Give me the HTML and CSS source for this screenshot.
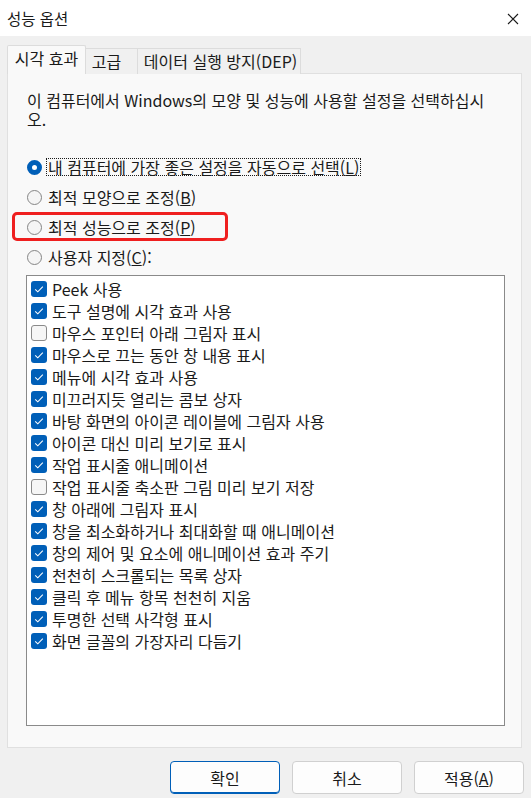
FILE: index.html
```html
<!DOCTYPE html>
<html lang="ko">
<head>
    <meta charset="UTF-8">
    <title>성능 옵션</title>
    <link rel="stylesheet" href="styles.css">
</head>
<body>
    <div class="titlebar">
        <span class="title">성능 옵션</span>
        <svg class="close" width="12" height="12" viewBox="0 0 12 12">
            <path d="M1 1 L11 11 M11 1 L1 11" stroke="#1a1a1a" stroke-width="1.1" fill="none"/>
        </svg>
    </div>

    <div class="tabs">
        <div class="tab tab-visual active">시각 효과</div>
        <div class="tab tab-advanced">고급</div>
        <div class="tab tab-dep">데이터 실행 방지(DEP)</div>
    </div>

    <div class="panel">
        <p class="intro">이 컴퓨터에서 Windows의 모양 및 성능에 사용할 설정을 선택하십시오.</p>

        <div class="radios">
            <div class="radio-row">
                <span class="radio checked"></span>
                <span class="radio-label focused">내 컴퓨터에 가장 좋은 설정을 자동으로 선택(<u>L</u>)</span>
            </div>
            <div class="radio-row">
                <span class="radio"></span>
                <span class="radio-label">최적 모양으로 조정(<u>B</u>)</span>
            </div>
            <div class="radio-row highlighted">
                <span class="radio"></span>
                <span class="radio-label">최적 성능으로 조정(<u>P</u>)</span>
                <span class="mark"></span>
            </div>
            <div class="radio-row">
                <span class="radio"></span>
                <span class="radio-label">사용자 지정(<u>C</u>):</span>
            </div>
        </div>

        <div class="listbox" id="listbox"></div>
    </div>

    <div class="buttons">
        <button class="btn default">확인</button>
        <button class="btn">취소</button>
        <button class="btn">적용(<u>A</u>)</button>
    </div>

    <script>
        const effects = [
            { label: "Peek 사용", on: true },
            { label: "도구 설명에 시각 효과 사용", on: true },
            { label: "마우스 포인터 아래 그림자 표시", on: false },
            { label: "마우스로 끄는 동안 창 내용 표시", on: true },
            { label: "메뉴에 시각 효과 사용", on: true },
            { label: "미끄러지듯 열리는 콤보 상자", on: true },
            { label: "바탕 화면의 아이콘 레이블에 그림자 사용", on: true },
            { label: "아이콘 대신 미리 보기로 표시", on: true },
            { label: "작업 표시줄 애니메이션", on: true },
            { label: "작업 표시줄 축소판 그림 미리 보기 저장", on: false },
            { label: "창 아래에 그림자 표시", on: true },
            { label: "창을 최소화하거나 최대화할 때 애니메이션", on: true },
            { label: "창의 제어 및 요소에 애니메이션 효과 주기", on: true },
            { label: "천천히 스크롤되는 목록 상자", on: true },
            { label: "클릭 후 메뉴 항목 천천히 지움", on: true },
            { label: "투명한 선택 사각형 표시", on: true },
            { label: "화면 글꼴의 가장자리 다듬기", on: true }
        ];

        const tick = '<svg width="16" height="16" viewBox="0 0 16 16"><path d="M4.2 8.3 L6.8 10.8 L11.8 5.6" stroke="#fff" stroke-width="1.1" fill="none"/></svg>';

        const listbox = document.getElementById("listbox");
        effects.forEach(function (item) {
            const row = document.createElement("div");
            row.className = "item";
            const box = document.createElement("span");
            box.className = item.on ? "check on" : "check";
            if (item.on) box.innerHTML = tick;
            const text = document.createElement("span");
            text.textContent = item.label;
            row.appendChild(box);
            row.appendChild(text);
            listbox.appendChild(row);
        });
    </script>
</body>
</html>
```

FILE: styles.css
```css
body {
    margin: 0;
    background: #f0f0f0;
    color: #1a1a1a;
    font-family: "Noto Sans CJK KR", "Noto Sans", sans-serif;
    font-size: 16px;
    width: 531px;
    height: 798px;
    overflow: hidden;
}
.titlebar {
    height: 36px;
    background: #ffffff;
    display: flex;
    align-items: center;
    justify-content: space-between;
    padding: 0 12px 0 7px;
}
.title {
    font-size: 15.5px;
    line-height: 20px;
}
.close {
    margin-top: 1px;
}
.tabs {
    display: flex;
    align-items: flex-end;
    margin: 10px 0 -1px 7px;
    height: 28px;
    position: relative;
    z-index: 1;
}
.tab {
    box-sizing: border-box;
    height: 26px;
    line-height: 24px;
    text-align: center;
    border: 1px solid #dcdcdc;
    border-bottom: none;
    background: #f0f0f0;
}
.tab.active {
    height: 29px;
    line-height: 24px;
    background: #f9f9f9;
    border-radius: 2px 2px 0 0;
}
.tab-visual { width: 79px; }
.tab-advanced { width: 52px; border-left: none; padding-right: 10px; }
.tab-dep { width: 163px; border-left: none; padding-left: 3px; }

.panel {
    box-sizing: border-box;
    margin-left: 7px;
    width: 515px;
    height: 675px;
    background: #f9f9f9;
    border: 1px solid #e0e0e0;
    padding: 17px 16px 0 18px;
}
.intro {
    margin: 0 0 0 1px;
    line-height: 19px;
    width: 470px;
}
.radios {
    margin-top: 23px;
}
.radio-row {
    display: flex;
    align-items: center;
    height: 30px;
    padding-left: 1px;
    position: relative;
}
.radio {
    box-sizing: border-box;
    width: 15px;
    height: 15px;
    border-radius: 50%;
    border: 1px solid #858585;
    background: #f5f5f5;
    margin-right: 5px;
    flex-shrink: 0;
}
.radio.checked {
    border: 5px solid #005fb8;
    background: #ffffff;
}
.radio-label {
    line-height: 16px;
    padding: 0 1px;
}
.radio-label.focused {
    outline: 1px dotted #1a1a1a;
    outline-offset: 0;
}
.mark {
    position: absolute;
    left: -14px;
    top: 0;
    width: 216px;
    height: 29px;
    box-sizing: border-box;
    border: 3px solid #ef1f1f;
    border-radius: 5px;
}
.listbox {
    box-sizing: border-box;
    margin-top: 3px;
    height: 451px;
    width: 479px;
    background: #ffffff;
    border: 1px solid #8a8a8a;
    padding: 2px 0 0 4px;
}
.item {
    display: flex;
    align-items: center;
    height: 22px;
}
.check {
    box-sizing: border-box;
    width: 16px;
    height: 16px;
    border-radius: 3px;
    border: 1px solid #8a8a8a;
    background: #f6f6f6;
    margin-right: 5px;
    flex-shrink: 0;
}
.check.on {
    border: none;
    background: #005fb8;
}
.check svg {
    display: block;
}
.buttons {
    display: flex;
    justify-content: flex-end;
    gap: 12px;
    padding: 13px 7px 0 0;
}
.btn {
    box-sizing: border-box;
    width: 110px;
    height: 33px;
    font-family: inherit;
    font-size: 16px;
    color: #1a1a1a;
    background: #fdfdfd;
    border: 1px solid #d0d0d0;
    border-radius: 4px;
    padding: 0;
}
.btn.default {
    border: 1px solid #005fb8;
    box-shadow: inset 0 -1px 0 #005fb8;
}
```
